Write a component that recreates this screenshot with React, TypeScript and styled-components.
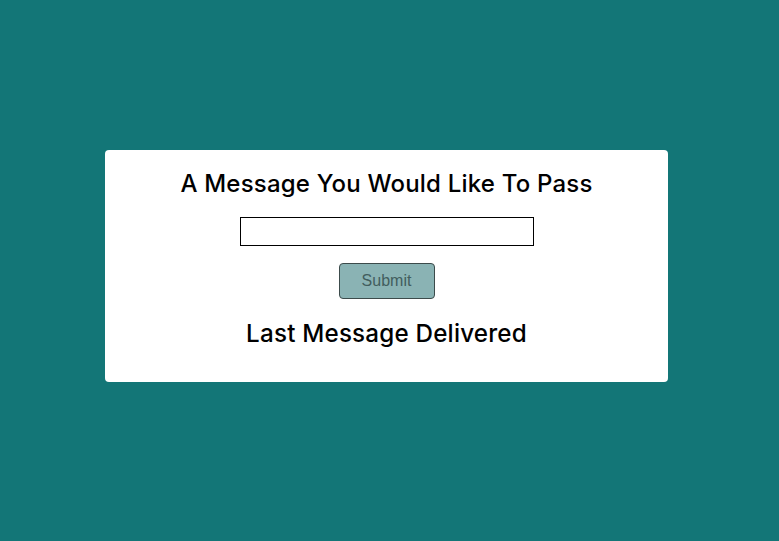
import React from "react";
import styled, { createGlobalStyle } from "styled-components";

const Global = createGlobalStyle`
  html, body { margin: 0; padding: 0; }
  body { background: #137677; min-height: 541px; }
`;

const Page = styled.main`
  min-height: 541px;
  padding: 150px 0 0 105px;
  box-sizing: border-box;
`;

const Card = styled.section`
  width: 563px;
  box-sizing: border-box;
  background: #ffffff;
  border-radius: 4px;
  padding: 16px 0 30px;
  display: flex;
  flex-direction: column;
  align-items: center;
`;

const Heading = styled.h2<{ $size: number }>`
  margin: 0;
  font-family: Inter, "Noto Sans", sans-serif;
  font-weight: 500;
  font-size: ${(p) => p.$size}px;
  line-height: 36px;
  color: #000;
  letter-spacing: 0.2px;
`;

const Field = styled.input`
  margin-top: 15px;
  width: 294px;
  height: 29px;
  box-sizing: border-box;
  border: 1px solid #000;
  border-radius: 0;
  padding: 0 4px;
  background: #fff;
  outline: none;
`;

const Button = styled.button`
  margin-top: 17px;
  margin-bottom: 17px;
  width: 96px;
  height: 36px;
  box-sizing: border-box;
  background: #8ab3b4;
  border: 1px solid #3c4b4b;
  border-radius: 4px;
  color: #425e5e;
  font-family: "Liberation Sans", Arial, sans-serif;
  font-size: 16px;
  cursor: pointer;
`;

export default function App() {
  return (
    <>
      <Global />
      <Page>
        <Card>
          <Heading $size={24}>A Message You Would Like To Pass</Heading>
          <Field type="text" />
          <Button type="button">Submit</Button>
          <Heading $size={24.2}>Last Message Delivered</Heading>
        </Card>
      </Page>
    </>
  );
}
